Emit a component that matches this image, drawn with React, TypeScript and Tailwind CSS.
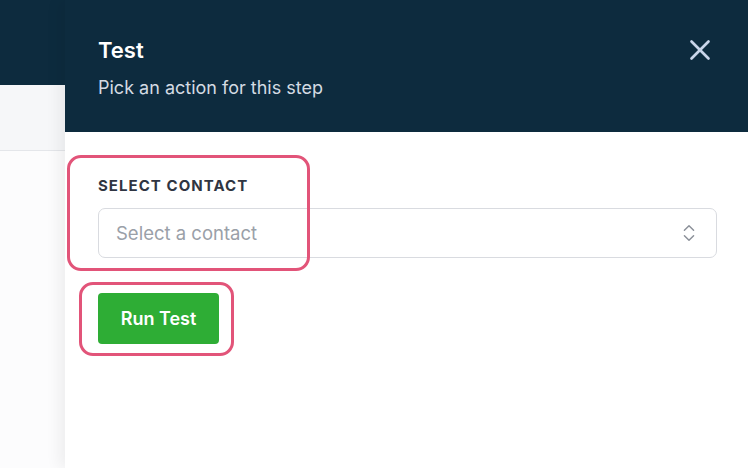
import { X, ChevronsUpDown } from 'lucide-react';

export default function App() {
  return (
    <div className="relative h-[468px] w-[748px] overflow-hidden bg-[#fcfcfd] font-['Inter',sans-serif]">
      {/* page behind the slide-over */}
      <div className="h-[85px] bg-[#0d2b3e]" />
      <div className="h-[66px] border-b border-[#e4e6ea] bg-[#f6f7f9]" />

      {/* slide-over panel */}
      <div className="absolute inset-y-0 right-0 left-[65px] flex flex-col bg-white shadow-[-6px_0_14px_rgba(0,0,0,0.06)]">
        <div className="flex h-[132px] items-start justify-between bg-[#0d2b3e] pl-[33px] pr-[31px] pt-[37px]">
          <div>
            <h2 className="text-[22px] font-semibold leading-[26px] text-white">Test</h2>
            <p className="mt-[13px] text-[18px] leading-[24px] text-[#d4dbe3]">Pick an action for this step</p>
          </div>
          <button className="-mt-[4px] text-[#c9d5ea]">
            <X size={34} strokeWidth={1.9} />
          </button>
        </div>

        <div className="px-[33px] pt-[45px]">
          <label className="block text-[15px] font-bold uppercase leading-[18px] tracking-[0.07em] text-[#2f3542]">
            Select contact
          </label>
          <div className="mt-[13px] flex h-[50px] w-[619px] items-center justify-between rounded-[7px] border border-[#d9dbe0] bg-white pl-[17px] pr-[16px]">
            <span className="pt-[2px] text-[18.5px] text-[#9aa0a8]">Select a contact</span>
            <ChevronsUpDown size={22} strokeWidth={1.6} className="text-[#8b9099]" />
          </div>
          <button className="mt-[35px] flex h-[51px] w-[121px] items-center justify-center rounded-[4px] bg-[#2ead35] text-[18px] font-semibold text-white">
            Run Test
          </button>
        </div>
      </div>

      {/* annotation highlights */}
      <div className="absolute left-[67px] top-[155px] h-[116px] w-[243px] rounded-[14px] border-[3px] border-[#e25479]" />
      <div className="absolute left-[79px] top-[282px] h-[74px] w-[155px] rounded-[14px] border-[3px] border-[#e25479]" />
    </div>
  );
}
